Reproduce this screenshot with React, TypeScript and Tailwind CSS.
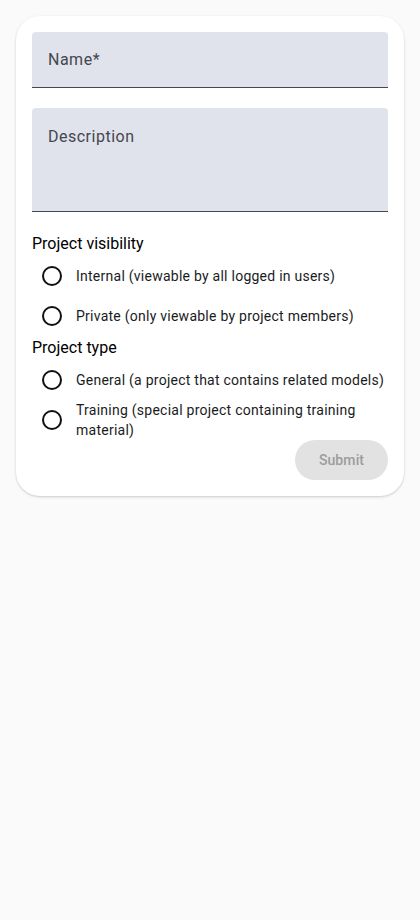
import { useState } from 'react'

const visibility = [
  { id: 'internal', label: 'Internal (viewable by all logged in users)' },
  { id: 'private', label: 'Private (only viewable by project members)' },
]

const types = [
  { id: 'general', label: 'General (a project that contains related models)' },
  { id: 'training', label: 'Training (special project containing training material)' },
]

function Radio({ label, checked, onClick }: { label: string; checked: boolean; onClick: () => void }) {
  return (
    <label className="flex min-h-10 cursor-pointer items-center" onClick={onClick}>
      <span className="flex h-10 w-10 shrink-0 items-center justify-center">
        <span className="flex h-5 w-5 items-center justify-center rounded-full border-2 border-[#111]">
          {checked && <span className="h-2.5 w-2.5 rounded-full bg-[#111]" />}
        </span>
      </span>
      <span className="ml-1 text-sm leading-5 tracking-[0.25px] text-[#1a1c1e]">{label}</span>
    </label>
  )
}

export default function App() {
  const [vis, setVis] = useState<string | null>(null)
  const [type, setType] = useState<string | null>(null)

  return (
    <div className="min-h-[920px] w-full bg-[#fafafa] p-4 font-['Roboto',sans-serif]">
      <form className="flex flex-col rounded-3xl bg-white p-4 shadow-[0_1px_3px_rgba(0,0,0,0.12),0_1px_2px_rgba(0,0,0,0.08)]">
        <div className="flex h-14 items-center rounded-t border-b border-[#44474e] bg-[#e0e2ec] px-4 pt-px">
          <span className="text-base tracking-[0.5px] text-[#44474e]">Name*</span>
        </div>

        <div className="mt-5 h-[104px] rounded-t border-b border-[#44474e] bg-[#e0e2ec] px-4 pt-[17px]">
          <span className="text-base leading-6 tracking-[0.5px] text-[#44474e]">Description</span>
        </div>

        <div className="mt-5 text-base leading-6 text-black">Project visibility</div>
        {visibility.map((v) => (
          <Radio key={v.id} label={v.label} checked={vis === v.id} onClick={() => setVis(v.id)} />
        ))}

        <div className="text-base leading-6 text-black">Project type</div>
        {types.map((t) => (
          <Radio key={t.id} label={t.label} checked={type === t.id} onClick={() => setType(t.id)} />
        ))}

        <div className="flex justify-end">
          <button
            type="button"
            disabled
            className="h-10 w-[93px] rounded-full bg-[#e2e2e2] text-sm font-medium tracking-[0.1px] text-[#9c9c9c]"
          >
            Submit
          </button>
        </div>
      </form>
    </div>
  )
}
